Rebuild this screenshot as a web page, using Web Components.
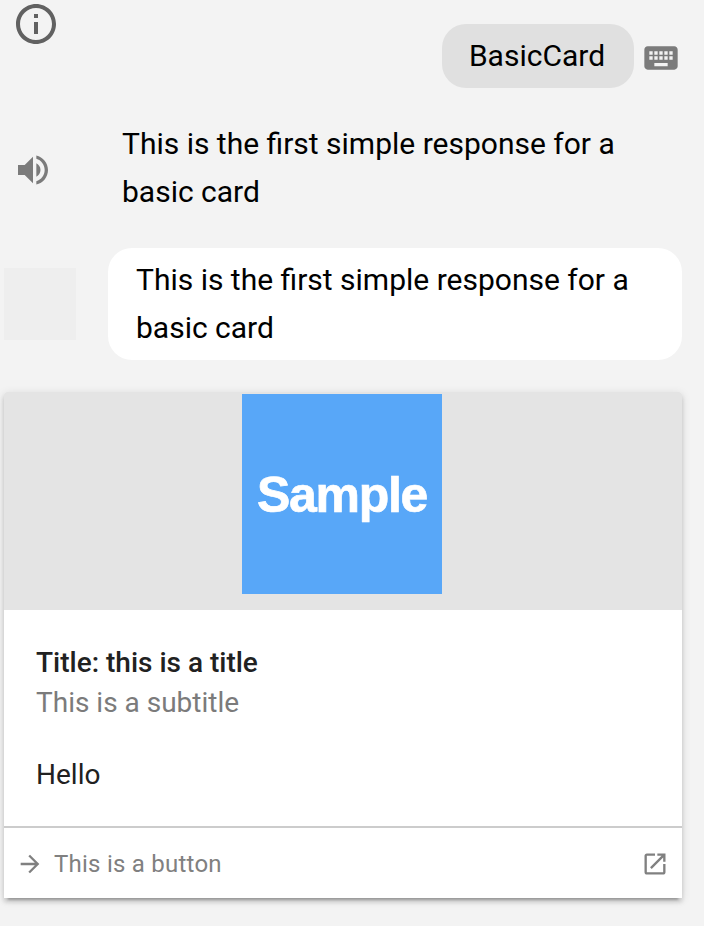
<!DOCTYPE html>
<html lang="en">
<head>
<meta charset="utf-8">
<title>BasicCard</title>
<style>
html,body{margin:0;height:926px;overflow:hidden;background:#f3f3f3}
body{font-family:Roboto,"Liberation Sans",sans-serif;color:#000}
</style>
</head>
<body>
<chat-simulator></chat-simulator>
<script>
const paths = {
  info: 'M11 17h2v-6h-2v6zm1-15C6.48 2 2 6.48 2 12s4.48 10 10 10 10-4.48 10-10S17.52 2 12 2zm0 18c-4.41 0-8-3.59-8-8s3.59-8 8-8 8 3.59 8 8-3.59 8-8 8zM11 9h2V7h-2v2z',
  keyboard: 'M20 5H4c-1.1 0-1.99.9-1.99 2L2 17c0 1.1.9 2 2 2h16c1.1 0 2-.9 2-2V7c0-1.1-.9-2-2-2zm-9 3h2v2h-2V8zm0 3h2v2h-2v-2zM8 8h2v2H8V8zm0 3h2v2H8v-2zm-1 2H5v-2h2v2zm0-3H5V8h2v2zm9 7H8v-2h8v2zm0-4h-2v-2h2v2zm0-3h-2V8h2v2zm3 3h-2v-2h2v2zm0-3h-2V8h2v2z',
  volume: 'M3 9v6h4l5 5V4L7 9H3zm13.5 3c0-1.77-1.02-3.29-2.5-4.03v8.05c1.48-.73 2.5-2.25 2.5-4.02zM14 3.23v2.06c2.89.86 5 3.54 5 6.71s-2.11 5.85-5 6.71v2.06c4.01-.91 7-4.49 7-8.77s-2.99-7.86-7-8.77z',
  arrow: 'M12 4l-1.41 1.41L16.17 11H4v2h12.17l-5.58 5.59L12 20l8-8z',
  open: 'M19 19H5V5h7V3H5c-1.11 0-2 .9-2 2v14c0 1.1.89 2 2 2h14c1.1 0 2-.9 2-2v-7h-2v7zM14 3v2h3.59l-9.83 9.83 1.41 1.41L19 6.41V10h2V3h-7z'
};
function define(name, html) {
  customElements.define(name, class extends HTMLElement {
    constructor() { super(); this.attachShadow({mode: 'open'}).innerHTML = html; }
  });
}
customElements.define('md-icon', class extends HTMLElement {
  connectedCallback() {
    if (this.shadowRoot) return;
    const s = this.getAttribute('size') || 40;
    this.attachShadow({mode: 'open'}).innerHTML =
      `<style>:host{display:block;flex:none;width:${s}px;height:${s}px}svg{display:block}</style>
       <svg width="${s}" height="${s}" viewBox="0 0 24 24" fill="currentColor"><path d="${paths[this.getAttribute('name')]}"/></svg>`;
  }
});
define('user-query', `<style>
:host{display:flex;align-items:center;gap:7px;color:#7b7b7b}
.bubble{box-sizing:border-box;width:192px;height:64px;padding-right:2px;border-radius:24px;background:#e0e0e0;color:#000;font-size:30px;line-height:64px;text-align:center}
md-icon{margin-top:4px}
</style><div class="bubble"><slot></slot></div><md-icon name="keyboard"></md-icon>`);
define('speech-line', `<style>
:host{display:flex;align-items:center;height:96px;padding-left:13px;color:#7b7b7b}
p{margin:0 0 0 69px;width:540px;font-size:30px;line-height:48px;color:#000}
md-icon{margin-top:4px}
</style><md-icon name="volume"></md-icon><p><slot></slot></p>`);
define('agent-bubble', `<style>
:host{display:flex;align-items:center;gap:32px;padding-left:4px}
.avatar{width:72px;height:72px;background:#eee}
p{box-sizing:border-box;margin:0;width:574px;height:112px;padding:8px 28px;border-radius:24px;background:#fff;font-size:30px;line-height:48px}
</style><div class="avatar"></div><p><slot></slot></p>`);
define('sample-image', `<style>
:host{display:flex;justify-content:center;align-items:center;width:200px;height:200px;background:#58a7f8;color:#fff;font:bold 50px/56px "Liberation Sans",sans-serif}
span{display:block;padding-top:2px;letter-spacing:-1.3px;-webkit-text-stroke:.7px #fff}
</style><span>Sample</span>`);
define('link-button', `<style>
:host{display:flex;align-items:center;height:68px;padding:2px 13px 0 12px;border-top:2px solid #ccc;color:#808080}
span{flex:1;margin-left:10px;font-size:24px;line-height:32px;letter-spacing:.24px}
</style><md-icon name="arrow" size="28"></md-icon><span><slot></slot></span><md-icon name="open" size="28"></md-icon>`);
define('basic-card', `<style>
:host{display:block;width:678px;background:#fff;border-radius:3px 3px 0 0;box-shadow:0 4px 4px rgba(0,0,0,.14),0 6px 2px -4px rgba(0,0,0,.2),0 2px 10px rgba(0,0,0,.12)}
.media{box-sizing:border-box;display:flex;justify-content:center;height:218px;padding:2px 2px 0 0;background:#e4e4e4;border-radius:3px 3px 0 0}
.body{height:216px;box-sizing:border-box;padding:33px 32px 0;font-size:28px;line-height:40px;color:#212121}
.title{font-weight:500}.sub{color:#7b7b7b}.text{margin-top:32px}
</style><div class="media"><slot name="media"></slot></div>
<div class="body"><div class="title"><slot name="title"></slot></div><div class="sub"><slot name="subtitle"></slot></div><div class="text"><slot></slot></div></div>
<slot name="action"></slot>`);
define('chat-simulator', `<style>
:host{display:block;height:926px;background:#f3f3f3}
header{display:flex;align-items:flex-start;justify-content:space-between;height:120px;padding:0 23px 0 12px;box-sizing:border-box;color:#616161}
user-query{margin-top:24px}
agent-bubble{margin-top:32px}
basic-card{margin:32px 0 0 4px}
</style>
<header><md-icon name="info" size="48"></md-icon><user-query>BasicCard</user-query></header>
<speech-line>This is the first simple response for a basic card</speech-line>
<agent-bubble>This is the first simple response for a basic card</agent-bubble>
<basic-card>
<sample-image slot="media"></sample-image>
<span slot="title">Title: this is a title</span><span slot="subtitle">This is a subtitle</span>Hello
<link-button slot="action">This is a button</link-button>
</basic-card>`);
</script>
</body>
</html>
